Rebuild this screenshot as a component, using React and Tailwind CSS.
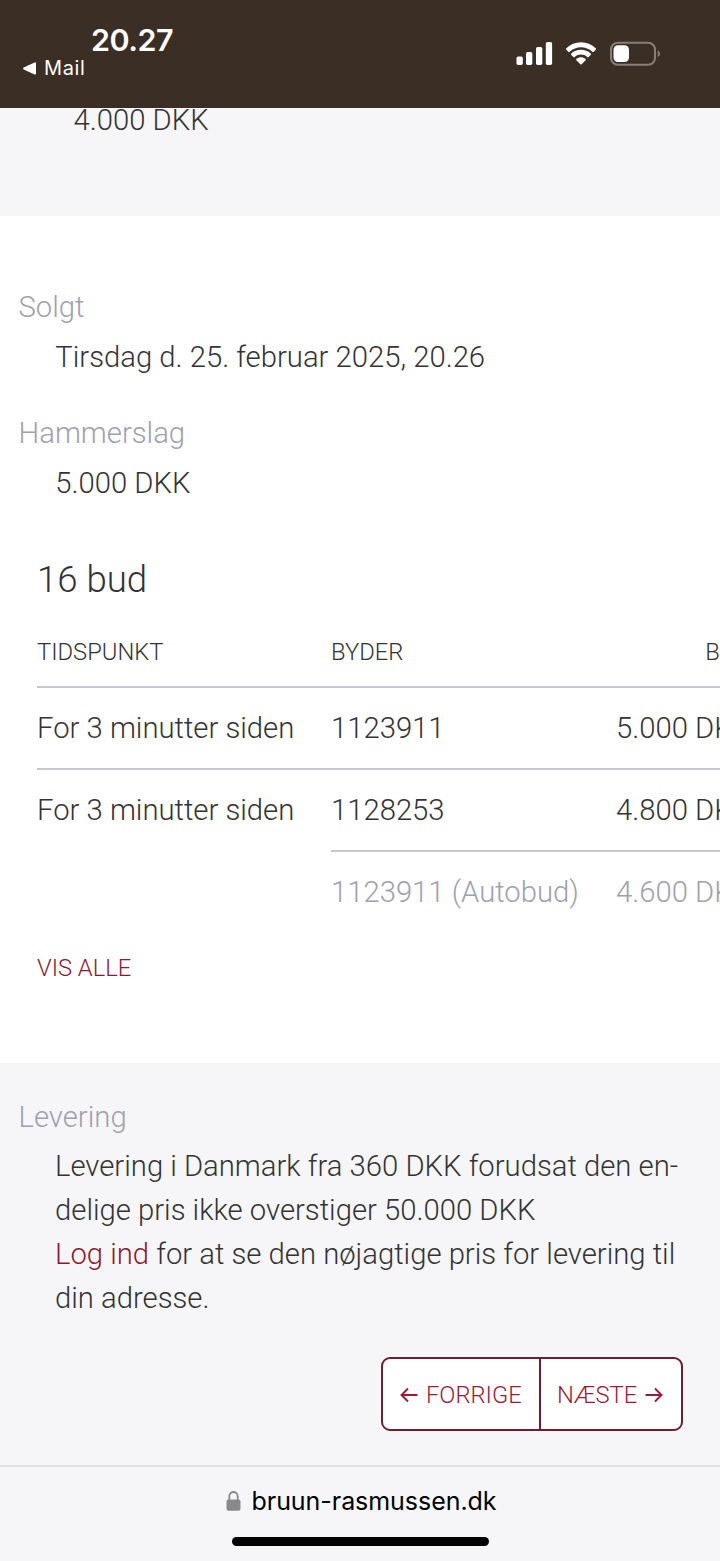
import React from "react";

function StatusBar() {
  return (
    <header className="relative z-10 flex h-[108px] shrink-0 justify-between bg-[#3b2e25] font-[Inter,sans-serif] text-white">
      <div className="flex flex-col pl-[23px] pt-[22px]">
        <span className="pl-[68px] text-[30.500px] font-semibold leading-[36px] tracking-[-0.500px]">20.27</span>
        <span className="flex items-center text-[20px] font-normal leading-[20px] tracking-[0.600px]">
          <svg className="mr-[8px] h-[13px] w-[13px]" viewBox="0 0 13 13" fill="currentColor">
            <path d="M.7 5.6 11.6.4Q13 0 13 1.400v10.200q0 1.300-1.400.900L.7 7.400Q-.5 6.500.7 5.600Z" />
          </svg>
          Mail
        </span>
      </div>
      <div className="flex items-start pr-[60px] pt-[41px]">
        <svg className="h-[25px] w-[144px]" viewBox="516 41 144 25" fill="white">
          <rect x="516.5" y="56.500" width="6.300" height="8.500" rx="1.700" />
          <rect x="526" y="52" width="6.300" height="13" rx="1.700" />
          <rect x="536" y="47" width="6.300" height="18" rx="1.700" />
          <rect x="545.800" y="42" width="6.300" height="23" rx="1.700" />
          <path d="M566.3 48.200C574 40.200 588 40.200 595.700 48.200Q596.400 49 595.700 49.700L593.700 51.700Q593 52.300 592.300 51.700C586 45.700 576 45.700 569.700 51.700Q569 52.300 568.300 51.700L566.300 49.700Q565.600 49 566.300 48.200Z" />
          <path d="M571.300 53.500C576.300 48.600 585.700 48.600 590.700 53.500Q591.400 54.200 590.700 54.900L588.600 57Q588 57.600 587.200 57C583.500 53.800 578.500 53.800 574.800 57Q574 57.600 573.400 57L571.300 54.900Q570.600 54.200 571.300 53.500Z" />
          <path d="M576.500 58.700C579 56.600 583 56.600 585.500 58.700Q586.200 59.400 585.500 60.200L581.700 64.200Q581 64.900 580.300 64.200L576.500 60.200Q575.800 59.400 576.500 58.700Z" />
          <rect x="611" y="42.800" width="44" height="22" rx="6.800" fill="none" stroke="#887f78" strokeWidth="2" />
          <rect x="613.500" y="45.300" width="15.500" height="16.700" rx="4.500" />
          <path d="M657.700 50.500C660.700 51.500 660.700 56 657.700 57Z" fill="#887f78" />
        </svg>
      </div>
    </header>
  );
}

const bids = [
  { time: "For 3 minutter siden", bidder: "1123911", amount: "5.000 DKK" },
  { time: "For 3 minutter siden", bidder: "1128253", amount: "4.800 DKK" },
  { time: "", bidder: "1123911 (Autobud)", amount: "4.600 DKK", auto: true },
];

function BidTable() {
  return (
    <div className="ml-[37px] mt-[28px] w-[714px]">
      <div className="flex h-[58px] border-b-2 border-[#c6c6d1] text-[23.750px] leading-[44px]">
        <span className="w-[294px] shrink-0">TIDSPUNKT</span>
        <span className="w-[280px]">BYDER</span>
        <span className="flex-1 text-right">BUD</span>
      </div>
      {bids.map((bid, i) => (
        <div key={bid.amount} className={bid.auto ? "flex h-[82px] text-[#a0a0b0]" : "flex h-[82px]"}>
          <span
            className={
              i === 0
                ? "w-[294px] shrink-0 border-b-2 border-[#c6c6d1] pt-[18px]"
                : "w-[294px] shrink-0 pt-[18px]"
            }
          >
            {bid.time}
          </span>
          <span
            className={
              bid.auto ? "flex flex-1 pt-[18px]" : "flex flex-1 border-b-2 border-[#c6c6d1] pt-[18px]"
            }
          >
            <span className="w-[285px] shrink-0">{bid.bidder}</span>
            <span className="whitespace-nowrap">{bid.amount}</span>
          </span>
        </div>
      ))}
    </div>
  );
}

function Arrow({ className }) {
  return (
    <svg className={className} viewBox="0 0 18 16" fill="none" stroke="currentColor" strokeWidth="1.900">
      <path d="M17.500 8H1.500M8 1.500 1.500 8 8 14.500" />
    </svg>
  );
}

export default function App() {
  return (
    <div className="flex h-[1561px] w-[720px] flex-col overflow-hidden bg-white font-[Roboto,sans-serif] text-[29.250px] font-light leading-[44px] text-[#333336]">
      <StatusBar />
      <section className="h-[108px] shrink-0 bg-[#f6f6f9]">
        <p className="-mt-[10px] pl-[73.500px]">4.000 DKK</p>
      </section>

      <main className="h-[847px] shrink-0 overflow-hidden pt-[69px]">
        <dl>
          <dt className="pl-[18.500px] text-[#a0a0b0]">Solgt</dt>
          <dd className="mt-[6px] pl-[55.300px]">Tirsdag d. 25. februar 2025, 20.26</dd>
          <dt className="mt-[32px] pl-[18.500px] text-[#a0a0b0]">Hammerslag</dt>
          <dd className="mt-[6px] pl-[55.300px]">5.000 DKK</dd>
        </dl>
        <h2 className="mt-[53px] pl-[37px] text-[36.600px]">16 bud</h2>
        <BidTable />
        <a className="ml-[37px] mt-[12px] block text-[23.750px] text-[#8d1931]">VIS ALLE</a>
      </main>

      <section className="h-[402px] shrink-0 bg-[#f6f6f9] pt-[32px]">
        <h3 className="pl-[18.500px] text-[#a0a0b0]">Levering</h3>
        <p className="mt-[5px] whitespace-nowrap pl-[55px]">
          Levering i Danmark fra 360 DKK forudsat den en-
          <br />
          delige pris ikke overstiger 50.000 DKK
          <br />
          <a className="text-[#8d1931]">Log ind</a> for at se den nøjagtige pris for levering til
          <br />
          din adresse.
        </p>
        <div className="ml-[381px] mt-[37px] flex h-[74px] w-[302px] overflow-hidden rounded-[9px] border-2 border-[#6d1f2f] bg-white text-[23.750px] leading-[70px] text-[#9b1b36]">
          <button className="flex w-[158px] items-center border-r-2 border-[#6d1f2f] pl-[17px] pt-[2px]">
            <Arrow className="mr-[8px] h-[16px] w-[18px]" />
            FORRIGE
          </button>
          <button className="flex flex-1 items-center pl-[16px] pt-[2px]">
            NÆSTE
            <Arrow className="ml-[8px] h-[16px] w-[18px] rotate-180" />
          </button>
        </div>
      </section>

      <footer className="flex flex-1 flex-col items-center border-t-2 border-[#e1e1e4] bg-[#f6f6f9] font-[Inter,sans-serif] text-black">
        <div className="mt-[17px] flex h-[34px] items-center pl-[2px] text-[25px] font-normal leading-[34px] tracking-[-0.050px]">
          <svg className="mr-[11px] h-[20px] w-[15px]" viewBox="0 0 15 20">
            <path d="M3.300 10V5.500C3.300-.500 11.700-.500 11.700 5.500V10" fill="none" stroke="#88888d" strokeWidth="1.800" />
            <rect x=".5" y="8.500" width="14" height="11.300" rx="2" fill="#88888d" />
          </svg>
          bruun-rasmussen.dk
        </div>
        <div className="mt-[19px] h-[9px] w-[257px] rounded-full bg-black" />
      </footer>
    </div>
  );
}
